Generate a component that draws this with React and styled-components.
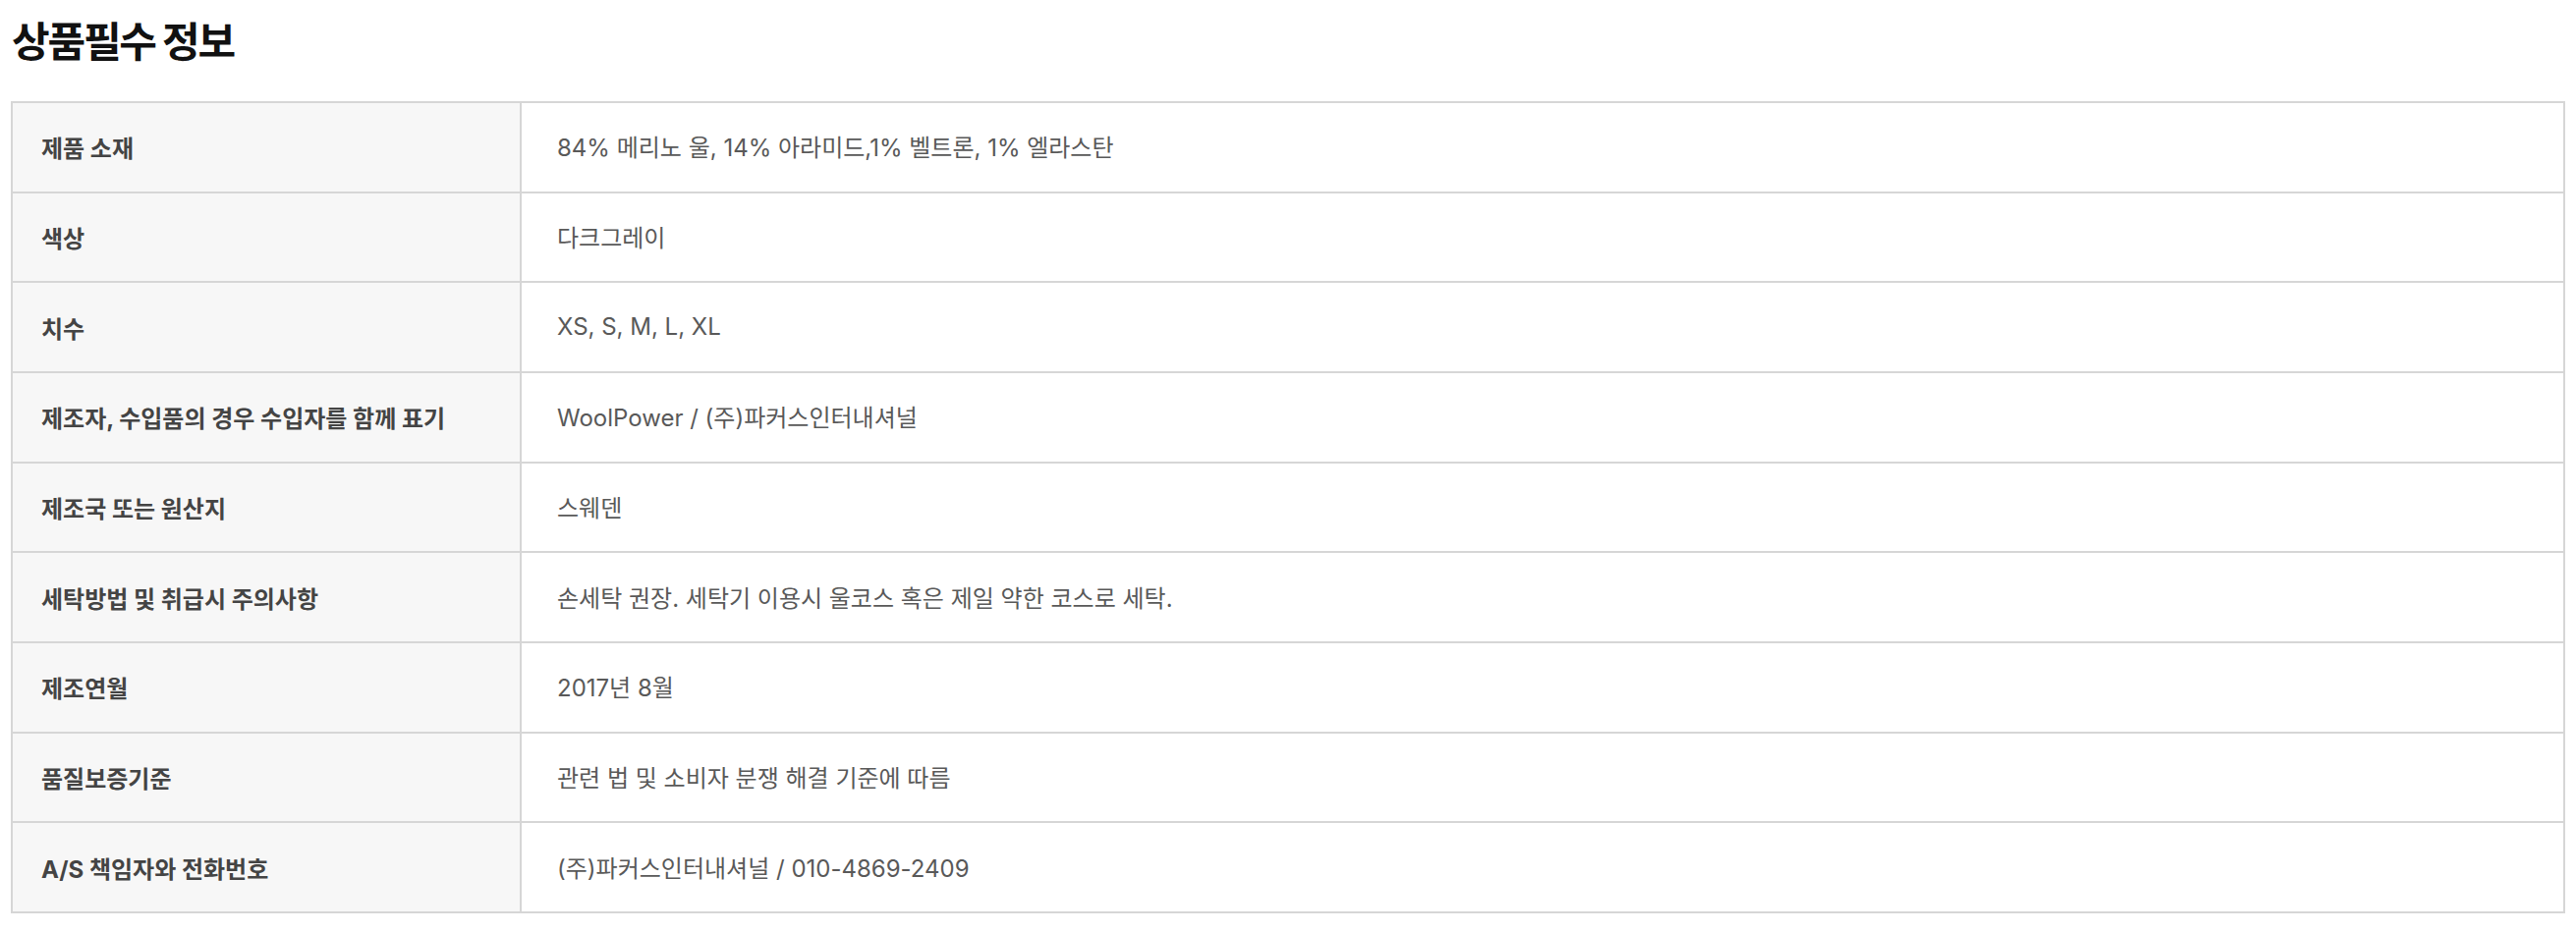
import React from 'react'
import styled, { createGlobalStyle } from 'styled-components'

const GlobalStyle = createGlobalStyle`
  body {
    margin: 0;
    background: #fff;
    font-family: Inter, "Noto Sans CJK KR", "Noto Sans", sans-serif;
  }
`

const Page = styled.div`
  padding: 16px 11px 20px;
`

const Title = styled.h2`
  margin: 0 0 39px 1px;
  font-family: "Noto Sans CJK KR", sans-serif;
  font-size: 42px;
  line-height: 48px;
  font-weight: 700;
  letter-spacing: -2.2px;
  color: #111;
`

const Table = styled.div`
  border: 2px solid #d6d6d6;
  border-bottom: none;
`

const Row = styled.div`
  display: grid;
  grid-template-columns: 518px 1fr;
  height: 89.67px;
  border-bottom: 2px solid #d6d6d6;
`

const Label = styled.div`
  display: flex;
  align-items: center;
  padding: 0 29px;
  background: #f7f7f7;
  border-right: 2px solid #d6d6d6;
  font-size: 24px;
  font-weight: 700;
  color: #444;
`

const Value = styled.div`
  display: flex;
  align-items: center;
  padding: 0 36px 2px;
  font-size: 24px;
  color: #595959;
`

const rows = [
  ['제품 소재', '84% 메리노 울, 14% 아라미드,1% 벨트론, 1% 엘라스탄'],
  ['색상', '다크그레이'],
  ['치수', 'XS, S, M, L, XL'],
  ['제조자, 수입품의 경우 수입자를 함께 표기', 'WoolPower / (주)파커스인터내셔널'],
  ['제조국 또는 원산지', '스웨덴'],
  ['세탁방법 및 취급시 주의사항', '손세탁 권장. 세탁기 이용시 울코스 혹은 제일 약한 코스로 세탁.'],
  ['제조연월', '2017년 8월'],
  ['품질보증기준', '관련 법 및 소비자 분쟁 해결 기준에 따름'],
  ['A/S 책임자와 전화번호', '(주)파커스인터내셔널 / 010-4869-2409'],
]

export default function App() {
  return (
    <Page>
      <GlobalStyle />
      <Title>상품필수 정보</Title>
      <Table>
        {rows.map(([label, value]) => (
          <Row key={label}>
            <Label>{label}</Label>
            <Value>{value}</Value>
          </Row>
        ))}
      </Table>
    </Page>
  )
}
